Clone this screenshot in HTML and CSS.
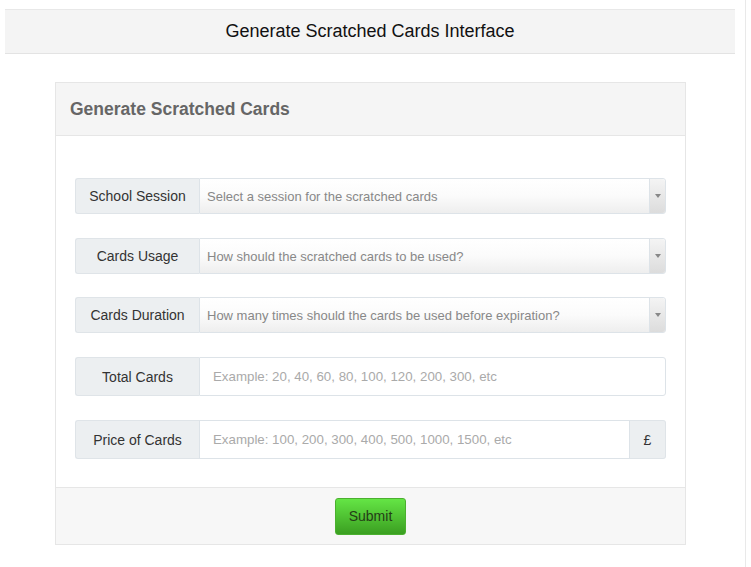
FILE: index.html
```html
<!DOCTYPE html>
<html>
<head>
<meta charset="utf-8">
<link rel="stylesheet" href="styles.css">
</head>
<body>
<div class="page">
  <div class="topbar">Generate Scratched Cards Interface</div>
  <div class="panel">
    <div class="panel-heading">Generate Scratched Cards</div>
    <div class="panel-body">
      <div class="group sel">
        <div class="addon label">School Session</div>
        <div class="select"><span class="ph">Select a session for the scratched cards</span><span class="arrow"></span></div>
      </div>
      <div class="group sel tight">
        <div class="addon label">Cards Usage</div>
        <div class="select"><span class="ph">How should the scratched cards to be used?</span><span class="arrow"></span></div>
      </div>
      <div class="group sel">
        <div class="addon label">Cards Duration</div>
        <div class="select"><span class="ph">How many times should the cards be used before expiration?</span><span class="arrow"></span></div>
      </div>
      <div class="group inp">
        <div class="addon label">Total Cards</div>
        <input class="field" type="text" placeholder="Example: 20, 40, 60, 80, 100, 120, 200, 300, etc">
      </div>
      <div class="group inp last">
        <div class="addon label">Price of Cards</div>
        <input class="field" type="text" placeholder="Example: 100, 200, 300, 400, 500, 1000, 1500, etc">
        <div class="addon currency">£</div>
      </div>
    </div>
    <div class="panel-footer">
      <button class="submit" type="button">Submit</button>
    </div>
  </div>
</div>
</body>
</html>
```
FILE: styles.css
```css
* { box-sizing: border-box; }
html, body { margin: 0; padding: 0; background: #fff; }
body { font-family: "Liberation Sans", Arial, sans-serif; color: #333; }
.page {
  width: 746px;
  height: 567px;
  padding: 9px 0 0 5px;
  border-right: 1px solid #e9e9e9;
}
.topbar {
  width: 730px;
  height: 45px;
  background: #f4f4f4;
  border-top: 1px solid #e8e8e8;
  border-bottom: 1px solid #e3e3e3;
  text-align: center;
  font-size: 18px;
  line-height: 42px;
  color: #111;
}
.panel {
  margin: 28px 0 0 50px;
  width: 631px;
  border: 1px solid #e6e6e6;
}
.panel-heading {
  height: 53px;
  background: #f5f5f5;
  border-bottom: 1px solid #e6e6e6;
  padding-left: 14px;
  font-size: 17.5px;
  font-weight: bold;
  color: #666;
  line-height: 53px;
}
.panel-body {
  padding: 42px 19px 28px 19px;
}
.group {
  display: flex;
  margin-bottom: 24px;
}
.group.tight { margin-bottom: 23px; }
.group.last { margin-bottom: 0; }
.group.sel { height: 36px; }
.group.inp { height: 39px; }
.addon {
  background: #eceff1;
  border: 1px solid #dfe4e8;
  font-size: 14px;
  color: #333;
  display: flex;
  align-items: center;
  justify-content: center;
}
.label {
  width: 124px;
  flex: none;
  border-right: none;
  border-radius: 3px 0 0 3px;
}
.currency {
  width: 36px;
  flex: none;
  border-left: none;
  border-radius: 0 3px 3px 0;
}
.select {
  flex: 1;
  display: flex;
  align-items: center;
  border: 1px solid #dde3e8;
  border-radius: 0 3px 3px 0;
  background: linear-gradient(#ffffff 0%, #fbfbfb 50%, #eeeeee 100%);
  font-size: 13px;
  color: #888;
  padding-left: 7px;
  position: relative;
}
.ph { flex: 1; }
.arrow {
  width: 16px;
  align-self: stretch;
  border-left: 1px solid #dde3e8;
  background: linear-gradient(#f4f4f4, #dcdcdc);
  display: flex;
  align-items: center;
  justify-content: center;
  border-radius: 0 3px 3px 0;
}
.arrow::after {
  content: "";
  border-left: 3px solid transparent;
  border-right: 3px solid transparent;
  border-top: 4px solid #888;
}
.field {
  flex: 1;
  min-width: 0;
  border: 1px solid #dde3e8;
  padding: 0 13px;
  font-family: "Liberation Sans", Arial, sans-serif;
  font-size: 13.3px;
  color: #333;
  outline: none;
  margin: 0;
  border-radius: 0 3px 3px 0;
}
.group.last .field { border-radius: 0; }
.field::placeholder { color: #aaaaaa; }
.panel-footer {
  background: #f7f7f7;
  border-top: 1px solid #e6e6e6;
  height: 57px;
  display: flex;
  align-items: center;
  justify-content: center;
}
.submit {
  width: 71px;
  height: 37px;
  border: 1px solid #4bb02f;
  border-radius: 3px;
  background: linear-gradient(#64e545, #3b9f21);
  font-family: "Liberation Sans", Arial, sans-serif;
  font-size: 14px;
  color: #243d17;
  padding: 0;
  margin-top: 0;
}
```
